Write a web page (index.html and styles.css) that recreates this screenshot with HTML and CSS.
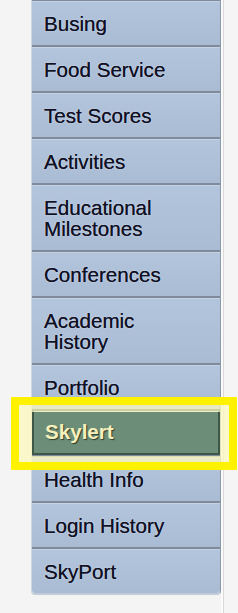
FILE: index.html
```html
<!DOCTYPE html>
<html>
<head>
<meta charset="utf-8">
<link rel="stylesheet" href="styles.css">
</head>
<body>
<div class="page">
  <div class="gutter"></div>
  <ul class="menu">
    <li class="item">Busing</li>
    <li class="item">Food Service</li>
    <li class="item">Test Scores</li>
    <li class="item">Activities</li>
    <li class="item">Educational<br>Milestones</li>
    <li class="item">Conferences</li>
    <li class="item">Academic<br>History</li>
    <li class="item">Portfolio</li>
    <li class="item active">Skylert</li>
    <li class="item">Health Info</li>
    <li class="item">Login History</li>
    <li class="item last">SkyPort</li>
  </ul>
  <div class="gap"></div>
  <div class="side"></div>
  <div class="highlight"><div class="halo"></div></div>
</div>
</body>
</html>
```
FILE: styles.css
```css
html, body {
  margin: 0;
  padding: 0;
  background: #f4f4f4;
}
.page {
  position: relative;
  display: flex;
  height: 613px;
  overflow: hidden;
  font-family: "Liberation Sans", Arial, sans-serif;
}
.gutter {
  width: 31px;
  flex: none;
}
.menu {
  list-style: none;
  margin: -1px 0 0 0;
  padding: 0;
  width: 188px;
  flex: none;
  align-self: flex-start;
  border-left: 1px solid #cfd7e2;
  border-right: 1px solid #8a97a9;
  border-radius: 0 0 4px 4px;
  border-bottom: 2px solid #c2ccd8;
}
.item {
  border-top: 2px solid #7f8b9d;
  box-shadow: inset 0 1px 0 #c4d2e3;
  background: linear-gradient(#b3c5dc, #a9bcd4);
  padding: 12px 0 11px 12px;
  font-size: 20.6px;
  line-height: 21px;
  color: #101024;
  text-shadow: 0 0 0.6px rgba(16, 16, 36, 0.8), 0 0 2px rgba(255, 255, 255, 0.5);
}
.item.last {
  border-radius: 0 0 3px 3px;
}
.item.active {
  background: #6c8e78;
  border: 2px solid #3f5747;
  padding: 10px 0 11px 11px;
  color: #f6f0bc;
  font-weight: bold;
  text-shadow: 1px 1px 1px #2e3a2c;
}
.gap {
  width: 2px;
  flex: none;
  background: #fbfbfb;
}
.side {
  flex: 1;
  border-left: 1px solid #d9d9d9;
  background: #f5f5f5;
}
.highlight {
  position: absolute;
  left: 11px;
  top: 397px;
  width: 210px;
  height: 57px;
  border: 8px solid #fff200;
}
.halo {
  box-sizing: border-box;
  height: 100%;
  border-style: solid;
  border-color: rgba(252, 248, 190, 0.75);
  border-width: 7px 9px 6px 13px;
}
```
